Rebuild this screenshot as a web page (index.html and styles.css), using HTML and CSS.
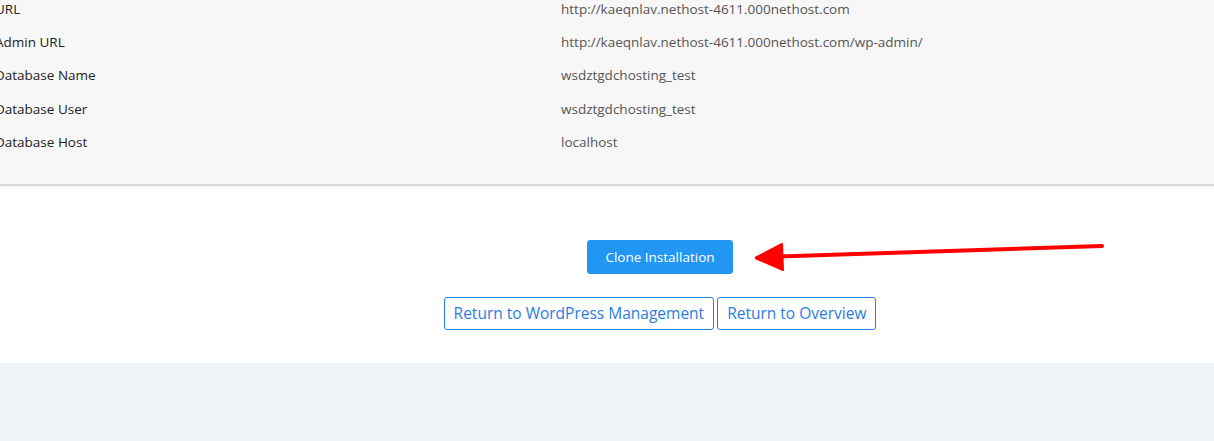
FILE: index.html
```html
<!DOCTYPE html>
<html lang="en">

<head>
    <meta charset="UTF-8" />
    <meta name="viewport" content="width=device-width, initial-scale=1.0" />
    <link rel="stylesheet" href="styles.css">
    <title>Clone Installation</title>
</head>

<body>
    <div class="card">
        <div class="details">
            <div class="row"><span class="label">URL</span><span class="value">http://kaeqnlav.nethost-4611.000nethost.com</span></div>
            <div class="row"><span class="label">Admin URL</span><span class="value">http://kaeqnlav.nethost-4611.000nethost.com/wp-admin/</span></div>
            <div class="row"><span class="label">Database Name</span><span class="value">wsdztgdchosting_test</span></div>
            <div class="row"><span class="label">Database User</span><span class="value">wsdztgdchosting_test</span></div>
            <div class="row"><span class="label">Database Host</span><span class="value">localhost</span></div>
        </div>

        <div class="actions">
            <div class="clone-wrap">
                <button class="btn btn-primary">Clone Installation</button>
                <!-- pointer to the clone button -->
                <svg class="pointer" width="360" height="40" viewBox="0 0 360 40">
                    <line x1="24" y1="14.5" x2="347" y2="4" stroke="#ff0000" stroke-width="4" stroke-linecap="round" />
                    <polygon points="0,16 27,2 28,28" fill="#ff0000" stroke="#ff0000" stroke-width="2" stroke-linejoin="round" />
                </svg>
            </div>
            <div class="return">
                <button class="btn btn-outline">Return to WordPress Management</button>
                <button class="btn btn-outline">Return to Overview</button>
            </div>
        </div>
    </div>
</body>

</html>
```

FILE: styles.css
```css
body {
    margin: 0;
    background-color: #f0f4f8;
    font-family: "Open Sans", Arial, sans-serif;
    color: #222;
    overflow: hidden;
}

.card {
    background-color: #fff;
    box-shadow: 0 2px 6px rgba(0, 0, 0, 0.16);
    padding-bottom: 33px;
}

.details {
    margin-top: -8px;
    margin-left: -5px;
    padding: 0 0 25px 0;
    background-color: #f7f7f7;
    border-bottom: 2px solid #d9d9d9;
    box-shadow: 0 2px 3px rgba(0, 0, 0, 0.05);
}

.row {
    display: grid;
    grid-template-columns: 566px 1fr;
    height: 33.4px;
    align-items: center;
    font-size: 13.5px;
}

.label {
    color: #222;
}

.value {
    color: #555;
}

.actions {
    display: flex;
    flex-direction: column;
    align-items: center;
    gap: 23px;
    padding: 54px 0 0 106px;
}

.clone-wrap {
    position: relative;
}

.pointer {
    position: absolute;
    left: calc(100% + 22px);
    top: 2px;
}

.btn {
    font-family: inherit;
    border-radius: 3px;
    cursor: pointer;
    margin: 0;
}

.btn-primary {
    background-color: #2196f3;
    border: 1px solid #2196f3;
    color: #fff;
    font-size: 13.5px;
    height: 34px;
    padding: 0 17px;
}

.btn-outline {
    background-color: #fff;
    border: 1px solid #1a7ff0;
    color: #2a7de1;
    font-size: 15.5px;
    height: 33px;
    padding: 0 9px;
}

.return {
    display: flex;
    gap: 3px;
}
```
